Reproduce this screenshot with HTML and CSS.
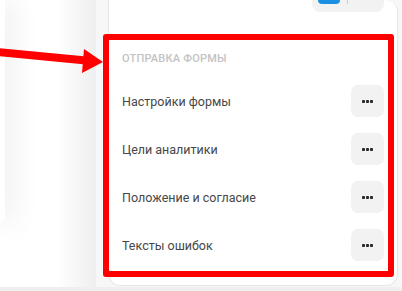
FILE: index.html
```html
<!DOCTYPE html>
<html lang="ru">
<head>
<meta charset="utf-8">
<link rel="stylesheet" href="styles.css">
</head>
<body>
<div class="app">
  <div class="preview"><div class="preview-card"></div></div>
  <aside class="sidebar">
    <div class="panel">
      <div class="top-row">
        <div class="seg"><span class="seg-toggle"></span><span class="seg-divider"></span></div>
      </div>
      <div class="section">
        <div class="section-title">Отправка формы</div>
        <div class="row"><span class="row-label">Настройки формы</span><button class="more"><svg width="11" height="3" viewBox="0 0 11 3"><rect x="0" y="0" width="3" height="3" rx="0.8"/><rect x="4" y="0" width="3" height="3" rx="0.8"/><rect x="8" y="0" width="3" height="3" rx="0.8"/></svg></button></div>
        <div class="row"><span class="row-label">Цели аналитики</span><button class="more"><svg width="11" height="3" viewBox="0 0 11 3"><rect x="0" y="0" width="3" height="3" rx="0.8"/><rect x="4" y="0" width="3" height="3" rx="0.8"/><rect x="8" y="0" width="3" height="3" rx="0.8"/></svg></button></div>
        <div class="row"><span class="row-label">Положение и согласие</span><button class="more"><svg width="11" height="3" viewBox="0 0 11 3"><rect x="0" y="0" width="3" height="3" rx="0.8"/><rect x="4" y="0" width="3" height="3" rx="0.8"/><rect x="8" y="0" width="3" height="3" rx="0.8"/></svg></button></div>
        <div class="row"><span class="row-label">Тексты ошибок</span><button class="more"><svg width="11" height="3" viewBox="0 0 11 3"><rect x="0" y="0" width="3" height="3" rx="0.8"/><rect x="4" y="0" width="3" height="3" rx="0.8"/><rect x="8" y="0" width="3" height="3" rx="0.8"/></svg></button></div>
      </div>
    </div>
  </aside>
  <svg class="arrow" width="110" height="80" viewBox="0 0 110 80">
    <line x1="-2" y1="52" x2="86" y2="60.5" stroke="#ff0000" stroke-width="8"/>
    <polygon points="84,49 103,62 82,73" fill="#ff0000"/>
  </svg>
  <div class="highlight"></div>
</div>
</body>
</html>
```

FILE: styles.css
```css
* { box-sizing: border-box; }
html, body { margin: 0; padding: 0; }
body {
  background: #efefef;
  font-family: Roboto, "Noto Sans", "Liberation Sans", sans-serif;
  width: 402px;
  height: 291px;
  overflow: hidden;
}
.app {
  position: relative;
  display: flex;
  width: 402px;
  height: 287px;
}
.preview {
  flex: none;
  width: 96px;
  background: linear-gradient(to right, #ffffff 60%, #eeeeee 100%);
}
.preview-card {
  width: 5px;
  height: 222px;
  background: #ffffff;
  border-radius: 0 0 8px 0;
  box-shadow: 0 0 30px rgba(0, 0, 0, 0.3);
}
.sidebar {
  flex: 1;
  background: #f7f7f7;
  padding: 0 4px 0 12px;
  position: relative;
}
.panel {
  height: 286px;
  background: #ffffff;
  border: 1px solid #e6e6e6;
  border-top: none;
  border-radius: 0 12px 12px 12px;
  padding: 0 13px;
}
.top-row {
  display: flex;
  justify-content: flex-end;
}
.seg {
  position: relative;
  width: 72px;
  height: 12px;
  background: #f2f2f2;
  border-radius: 0 0 8px 8px;
}
.seg-toggle {
  position: absolute;
  left: 6px;
  top: 0;
  width: 22px;
  height: 4px;
  border-radius: 0 0 5px 5px;
  background: #1a8fe3;
}
.seg-divider {
  position: absolute;
  left: 35px;
  top: 0;
  width: 1px;
  height: 4px;
  background: #cfcfcf;
}
.section {
  display: flex;
  flex-direction: column;
}
.section-title {
  margin-top: 39px;
  font-size: 11px;
  line-height: 16px;
  font-weight: 500;
  color: #c3c3c3;
  text-transform: uppercase;
  letter-spacing: 0.2px;
}
.section-title + .row { margin-top: 10px; }
.row {
  height: 48px;
  display: flex;
  align-items: center;
  justify-content: space-between;
}
.row-label {
  font-size: 12.5px;
  color: #474747;
}
.more {
  width: 33px;
  height: 32px;
  border: none;
  border-radius: 7px;
  background: #f2f2f2;
  display: flex;
  align-items: center;
  justify-content: center;
  padding: 0;
}
.more svg { fill: #2b2b2b; display: block; }
.arrow {
  position: absolute;
  left: 0;
  top: 0;
}
.highlight {
  position: absolute;
  left: 103px;
  top: 34px;
  width: 291px;
  height: 243px;
  border: 6px solid #ff0000;
  border-radius: 3px;
}
```
